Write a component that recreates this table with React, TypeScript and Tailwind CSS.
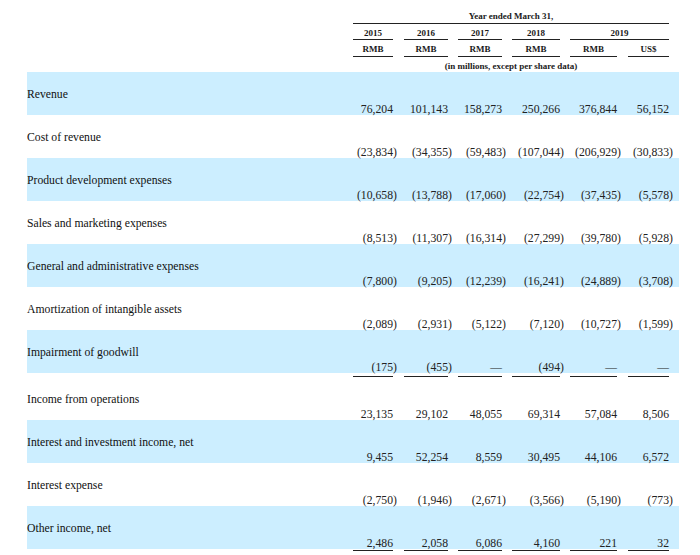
import React from "react";

const cols = [
  { w: "w-[40px]", g: "w-[11px]" },
  { w: "w-[44px]", g: "w-[10px]" },
  { w: "w-[44px]", g: "w-[10px]" },
  { w: "w-[48px]", g: "w-[10px]" },
  { w: "w-[47px]", g: "w-[11px]" },
  { w: "w-[41px]", g: "w-[10px]" },
];

type Row = { label: string; v: string[]; underline?: boolean };

const rows: Row[] = [
  { label: "Revenue", v: ["76,204", "101,143", "158,273", "250,266", "376,844", "56,152"] },
  { label: "Cost of revenue", v: ["(23,834)", "(34,355)", "(59,483)", "(107,044)", "(206,929)", "(30,833)"] },
  { label: "Product development expenses", v: ["(10,658)", "(13,788)", "(17,060)", "(22,754)", "(37,435)", "(5,578)"] },
  { label: "Sales and marketing expenses", v: ["(8,513)", "(11,307)", "(16,314)", "(27,299)", "(39,780)", "(5,928)"] },
  { label: "General and administrative expenses", v: ["(7,800)", "(9,205)", "(12,239)", "(16,241)", "(24,889)", "(3,708)"] },
  { label: "Amortization of intangible assets", v: ["(2,089)", "(2,931)", "(5,122)", "(7,120)", "(10,727)", "(1,599)"] },
  { label: "Impairment of goodwill", v: ["(175)", "(455)", "—", "(494)", "—", "—"], underline: true },
  { label: "Income from operations", v: ["23,135", "29,102", "48,055", "69,314", "57,084", "8,506"] },
  { label: "Interest and investment income, net", v: ["9,455", "52,254", "8,559", "30,495", "44,106", "6,572"] },
  { label: "Interest expense", v: ["(2,750)", "(1,946)", "(2,671)", "(3,566)", "(5,190)", "(773)"] },
  { label: "Other income, net", v: ["2,486", "2,058", "6,086", "4,160", "221", "32"], underline: true },
];

function Underline({ h }: { h: string }) {
  return (
    <div className="flex">
      <div className="w-[326px]" />
      {cols.map((c, i) => (
        <div key={i} className="flex">
          <div className={`${c.w} ${h} border-b border-[#222]`} />
          <div className={c.g} />
        </div>
      ))}
    </div>
  );
}

export default function App() {
  return (
    <div className="w-[700px] h-[555px] bg-white overflow-hidden font-['Liberation_Serif',serif] text-[#1a1a1a]">
      <div className="ml-[27px] w-[652px]">
        {/* Header */}
        <div className="flex text-[9px] font-bold leading-[11px]">
          <div className="w-[326px]" />
          <div className="w-[326px]">
            <div className="pt-[11px] w-[316px]">
              <div className="text-center h-[13px] border-b border-[#222]">Year ended March 31,</div>
            </div>
            <div className="flex">
              {[0, 1, 2, 3].map((i) => (
                <div key={i} className="flex">
                  <div className={`${cols[i].w} pt-[4px] text-center border-b border-[#222]`}>{2015 + i}</div>
                  <div className={cols[i].g} />
                </div>
              ))}
              <div className="w-[99px] pt-[4px] text-center border-b border-[#222]">2019</div>
            </div>
            <div className="flex">
              {cols.map((c, i) => (
                <div key={i} className="flex">
                  <div className={`${c.w} pt-[4px] pb-[1px] text-center border-b border-[#222]`}>
                    {i === 5 ? "US$" : "RMB"}
                  </div>
                  <div className={c.g} />
                </div>
              ))}
            </div>
            <div className="w-[316px] pt-[4px] text-center">(in millions, except per share data)</div>
          </div>
        </div>

        {/* Body */}
        <div className="text-[11.7px]">
          {rows.map((r, ri) => (
            <React.Fragment key={ri}>
              <div className={`flex h-[43px] ${ri % 2 === 0 ? "bg-[#cceeff]" : "bg-white"}`}>
                <div className="w-[326px] flex items-center pt-[3px] leading-[14px] text-[#111]">{r.label}</div>
                {r.v.map((val, ci) => {
                  const neg = val.startsWith("(");
                  const num = neg ? val.slice(0, -1) : val;
                  return (
                    <div key={ci} className="flex items-end">
                      <div className={`${cols[ci].w} text-right leading-[11px] text-[#222] whitespace-nowrap`}>{num}</div>
                      <div className={`${cols[ci].g} leading-[11px] text-[#222]`}>{neg ? ")" : ""}</div>
                    </div>
                  );
                })}
              </div>
              {r.underline && <Underline h={ri === 6 ? "h-[4px]" : "h-[2px]"} />}
            </React.Fragment>
          ))}
        </div>
      </div>
    </div>
  );
}
